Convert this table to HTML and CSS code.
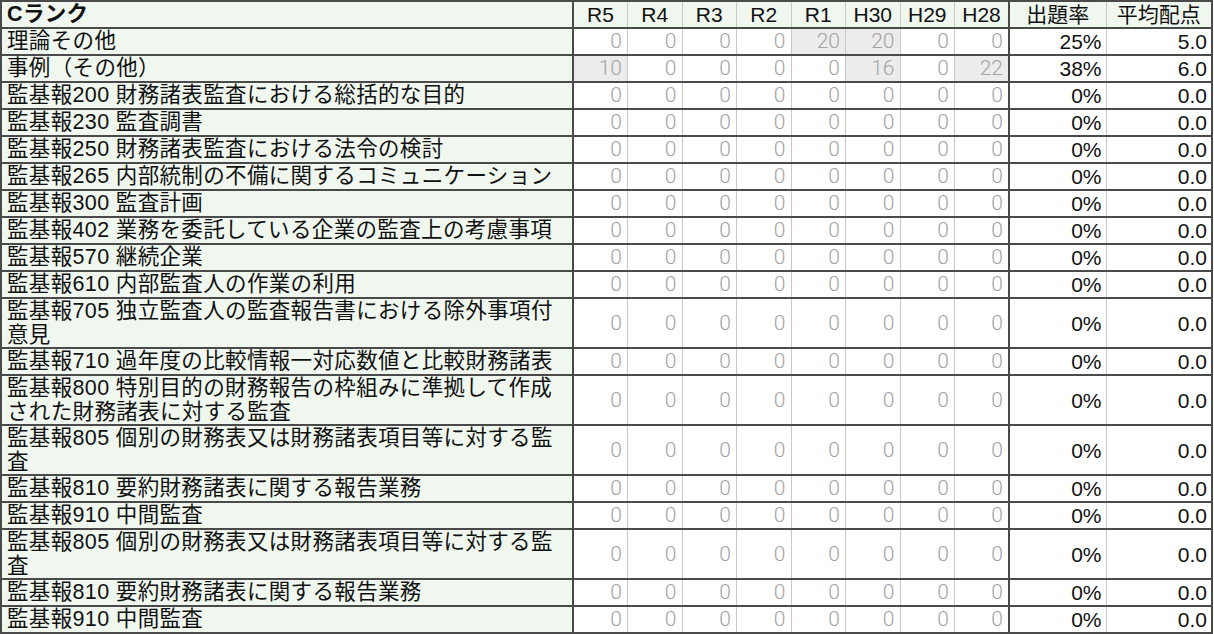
FILE: index.html
```html
<!DOCTYPE html>
<html lang="ja">
<head>
<meta charset="utf-8">
<link rel="stylesheet" href="styles.css">
</head>
<body>
<table class="rank">
<colgroup>
<col class="c-label"><col class="c-y"><col class="c-y"><col class="c-y"><col class="c-y"><col class="c-y"><col class="c-y"><col class="c-y"><col class="c-y"><col class="c-rate"><col class="c-avg">
</colgroup>
<thead>
<tr>
<th class="label title">Cランク</th>
<th class="yh">R5</th><th class="yh">R4</th><th class="yh">R3</th><th class="yh">R2</th><th class="yh">R1</th><th class="yh">H30</th><th class="yh">H29</th><th class="yh last">H28</th>
<th class="rh">出題率</th><th class="ah">平均配点</th>
</tr>
</thead>
<tbody>
<tr><td class="label">理論その他</td><td class="y">0</td><td class="y">0</td><td class="y">0</td><td class="y">0</td><td class="y hl">20</td><td class="y hl">20</td><td class="y">0</td><td class="y last">0</td><td class="rate">25%</td><td class="avg">5.0</td></tr>
<tr><td class="label">事例（その他）</td><td class="y hl">10</td><td class="y">0</td><td class="y">0</td><td class="y">0</td><td class="y">0</td><td class="y hl">16</td><td class="y">0</td><td class="y last hl">22</td><td class="rate">38%</td><td class="avg">6.0</td></tr>
<tr><td class="label">監基報200 財務諸表監査における総括的な目的</td><td class="y">0</td><td class="y">0</td><td class="y">0</td><td class="y">0</td><td class="y">0</td><td class="y">0</td><td class="y">0</td><td class="y last">0</td><td class="rate">0%</td><td class="avg">0.0</td></tr>
<tr><td class="label">監基報230 監査調書</td><td class="y">0</td><td class="y">0</td><td class="y">0</td><td class="y">0</td><td class="y">0</td><td class="y">0</td><td class="y">0</td><td class="y last">0</td><td class="rate">0%</td><td class="avg">0.0</td></tr>
<tr><td class="label">監基報250 財務諸表監査における法令の検討</td><td class="y">0</td><td class="y">0</td><td class="y">0</td><td class="y">0</td><td class="y">0</td><td class="y">0</td><td class="y">0</td><td class="y last">0</td><td class="rate">0%</td><td class="avg">0.0</td></tr>
<tr><td class="label">監基報265 内部統制の不備に関するコミュニケーション</td><td class="y">0</td><td class="y">0</td><td class="y">0</td><td class="y">0</td><td class="y">0</td><td class="y">0</td><td class="y">0</td><td class="y last">0</td><td class="rate">0%</td><td class="avg">0.0</td></tr>
<tr><td class="label">監基報300 監査計画</td><td class="y">0</td><td class="y">0</td><td class="y">0</td><td class="y">0</td><td class="y">0</td><td class="y">0</td><td class="y">0</td><td class="y last">0</td><td class="rate">0%</td><td class="avg">0.0</td></tr>
<tr><td class="label">監基報402 業務を委託している企業の監査上の考慮事項</td><td class="y">0</td><td class="y">0</td><td class="y">0</td><td class="y">0</td><td class="y">0</td><td class="y">0</td><td class="y">0</td><td class="y last">0</td><td class="rate">0%</td><td class="avg">0.0</td></tr>
<tr><td class="label">監基報570 継続企業</td><td class="y">0</td><td class="y">0</td><td class="y">0</td><td class="y">0</td><td class="y">0</td><td class="y">0</td><td class="y">0</td><td class="y last">0</td><td class="rate">0%</td><td class="avg">0.0</td></tr>
<tr><td class="label">監基報610 内部監査人の作業の利用</td><td class="y">0</td><td class="y">0</td><td class="y">0</td><td class="y">0</td><td class="y">0</td><td class="y">0</td><td class="y">0</td><td class="y last">0</td><td class="rate">0%</td><td class="avg">0.0</td></tr>
<tr><td class="label">監基報705 独立監査人の監査報告書における除外事項付<br>意見</td><td class="y">0</td><td class="y">0</td><td class="y">0</td><td class="y">0</td><td class="y">0</td><td class="y">0</td><td class="y">0</td><td class="y last">0</td><td class="rate">0%</td><td class="avg">0.0</td></tr>
<tr><td class="label">監基報710 過年度の比較情報一対応数値と比較財務諸表</td><td class="y">0</td><td class="y">0</td><td class="y">0</td><td class="y">0</td><td class="y">0</td><td class="y">0</td><td class="y">0</td><td class="y last">0</td><td class="rate">0%</td><td class="avg">0.0</td></tr>
<tr><td class="label">監基報800 特別目的の財務報告の枠組みに準拠して作成<br>された財務諸表に対する監査</td><td class="y">0</td><td class="y">0</td><td class="y">0</td><td class="y">0</td><td class="y">0</td><td class="y">0</td><td class="y">0</td><td class="y last">0</td><td class="rate">0%</td><td class="avg">0.0</td></tr>
<tr><td class="label">監基報805 個別の財務表又は財務諸表項目等に対する監<br>査</td><td class="y">0</td><td class="y">0</td><td class="y">0</td><td class="y">0</td><td class="y">0</td><td class="y">0</td><td class="y">0</td><td class="y last">0</td><td class="rate">0%</td><td class="avg">0.0</td></tr>
<tr><td class="label">監基報810 要約財務諸表に関する報告業務</td><td class="y">0</td><td class="y">0</td><td class="y">0</td><td class="y">0</td><td class="y">0</td><td class="y">0</td><td class="y">0</td><td class="y last">0</td><td class="rate">0%</td><td class="avg">0.0</td></tr>
<tr><td class="label">監基報910 中間監査</td><td class="y">0</td><td class="y">0</td><td class="y">0</td><td class="y">0</td><td class="y">0</td><td class="y">0</td><td class="y">0</td><td class="y last">0</td><td class="rate">0%</td><td class="avg">0.0</td></tr>
<tr><td class="label">監基報805 個別の財務表又は財務諸表項目等に対する監<br>査</td><td class="y">0</td><td class="y">0</td><td class="y">0</td><td class="y">0</td><td class="y">0</td><td class="y">0</td><td class="y">0</td><td class="y last">0</td><td class="rate">0%</td><td class="avg">0.0</td></tr>
<tr><td class="label">監基報810 要約財務諸表に関する報告業務</td><td class="y">0</td><td class="y">0</td><td class="y">0</td><td class="y">0</td><td class="y">0</td><td class="y">0</td><td class="y">0</td><td class="y last">0</td><td class="rate">0%</td><td class="avg">0.0</td></tr>
<tr><td class="label">監基報910 中間監査</td><td class="y">0</td><td class="y">0</td><td class="y">0</td><td class="y">0</td><td class="y">0</td><td class="y">0</td><td class="y">0</td><td class="y last">0</td><td class="rate">0%</td><td class="avg">0.0</td></tr>
</tbody>
</table>
</body>
</html>
```
FILE: styles.css
```css
html, body {
  margin: 0;
  padding: 0;
  background: #ffffff;
}

body {
  font-family: "Liberation Sans", "Noto Sans CJK JP", sans-serif;
  color: #111111;
}

.rank {
  border-collapse: collapse;
  table-layout: fixed;
  width: 1213px;
  font-size: 21px;
  line-height: 23.5px;
}

.c-label { width: 572px; }
.c-y { width: 54.5px; }
.c-rate { width: 97px; }
.c-avg { width: 106px; }

.rank th,
.rank td {
  height: 24px;
  border-top: 2px solid #4a4a4a;
  border-bottom: 2px solid #4a4a4a;
  border-left: 1px solid #c9c9c9;
  border-right: 1px solid #c9c9c9;
  padding: 1px 4px 0 4px;
  white-space: nowrap;
  overflow: hidden;
  vertical-align: middle;
}

.rank .label {
  background: #eff7ef;
  text-align: left;
  padding-left: 5px;
  border-left: 2px solid #4a4a4a;
  border-right: 2px solid #4a4a4a;
  font-size: 21.5px;
  letter-spacing: 0.35px;
  font-weight: normal;
}

.rank thead th {
  background: #eff7ef;
  font-weight: normal;
  text-align: center;
}

.rank thead th.title {
  font-weight: bold;
  text-align: left;
}

.rank .y {
  text-align: right;
  color: #a3a3a3;
  font-family: "Roboto", "Liberation Sans", sans-serif;
  font-weight: 300;
  padding-right: 5px;
}

.rank .hl {
  background: #ececec;
}

.rank .last {
  border-right: 2px solid #4a4a4a;
}

.rank .rate,
.rank .avg {
  text-align: right;
  color: #111111;
  padding-right: 4px;
}

.rank .avg,
.rank .ah {
  border-right: 2px solid #4a4a4a;
}
```
